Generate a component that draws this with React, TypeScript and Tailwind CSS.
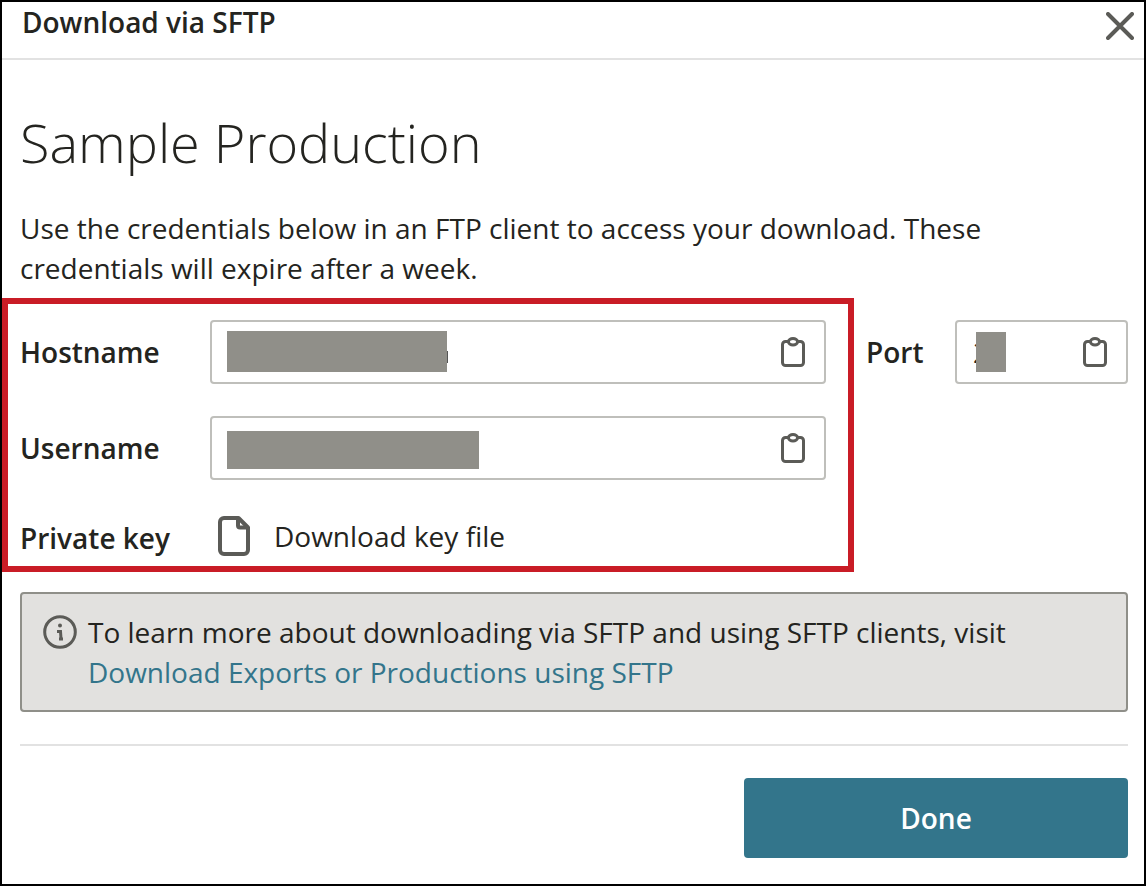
import type { ReactNode } from 'react';

function CloseIcon() {
    return (
        <svg width="28" height="28" viewBox="0 0 28 28" fill="none" stroke="currentColor" strokeWidth="4" strokeLinecap="round" aria-hidden="true">
            <path d="M2 2 26 26M26 2 2 26" />
        </svg>
    );
}

function ClipboardIcon() {
    return (
        <svg width="24" height="30" viewBox="0 0 24 30" fill="none" stroke="currentColor" strokeWidth="3" aria-hidden="true">
            <path d="M7 4.5H4.5a3 3 0 0 0-3 3v18a3 3 0 0 0 3 3h15a3 3 0 0 0 3-3v-18a3 3 0 0 0-3-3H17" />
            <ellipse cx="12" cy="4.8" rx="4.5" ry="3.2" />
        </svg>
    );
}

function FileIcon() {
    return (
        <svg width="32" height="40" viewBox="0 0 32 40" fill="none" stroke="currentColor" strokeWidth="4" strokeLinejoin="round" aria-hidden="true">
            <path d="M20.500 2H6a4 4 0 0 0-4 4v28a4 4 0 0 0 4 4h20a4 4 0 0 0 4-4V11.500z" />
            <path d="M20 2v7.500a2 2 0 0 0 2 2h8" />
        </svg>
    );
}

function InfoIcon() {
    return (
        <svg width="34" height="34" viewBox="0 0 34 34" fill="none" stroke="currentColor" strokeWidth="3" aria-hidden="true">
            <circle cx="17" cy="17" r="15.3" />
            <circle cx="17" cy="10.500" r="2" fill="currentColor" stroke="none" />
            <path d="M14 16.500h3.500l.5 7M16 24h4" />
        </svg>
    );
}

type CopyFieldProps = {
    id: string;
    label: string;
    value?: string;
    children: ReactNode;
};

function CopyField({ id, label, value = '', children }: CopyFieldProps) {
    return (
        <div className="relative flex h-16 min-w-0 flex-1 items-center rounded border-2 border-[#bfbfbb] pr-[19px]">
            <input id={id} type="text" readOnly value={value} className="h-full min-w-0 flex-1 bg-transparent pl-4 outline-none" />
            {children}
            <button type="button" aria-label={`Copy ${label}`} className="text-[#5b5b57]">
                <ClipboardIcon />
            </button>
        </div>
    );
}

export default function App() {
    return (
        <div className="flex min-h-screen flex-col border-2 border-black bg-white font-['Open_Sans',sans-serif] text-[28px] leading-10 text-[#242420]">
            <header className="flex h-[58px] items-start justify-between border-b-2 border-[#e2e2e2] pr-[10px] pl-5">
                <h2 className="font-semibold">Download via SFTP</h2>
                <button type="button" aria-label="Close" className="pt-[10px] text-[#5b5b57]">
                    <CloseIcon />
                </button>
            </header>

            <div className="pr-4 pl-[18px]">
                <h1 className="pt-[50px] text-[54px] leading-16 font-light">Sample Production</h1>
                <p className="mt-[34px] mb-[10px]">
                    Use the credentials below in an FTP client to access your download. These credentials will expire after a week.
                </p>
            </div>

            {/* Credentials */}
            <div className="flex items-start pr-4">
                <div className="min-w-0 flex-1 border-6 border-[#c91c26] pt-4 pr-[22px] pb-2 pl-3">
                    <div className="flex items-center">
                        <label htmlFor="hostname" className="w-[190px] font-semibold">Hostname</label>
                        <CopyField id="hostname" label="hostname">
                            <span className="absolute top-[9px] left-[15px] h-[41px] w-[220px] bg-[#908f89]">
                                <span className="absolute top-5 left-full h-3 w-px bg-[#555]" />
                            </span>
                        </CopyField>
                    </div>
                    <div className="mt-8 flex items-center">
                        <label htmlFor="username" className="w-[190px] font-semibold">Username</label>
                        <CopyField id="username" label="username">
                            <span className="absolute top-[13px] left-[15px] h-[38px] w-[252px] bg-[#908f89]" />
                        </CopyField>
                    </div>
                    <div className="mt-[34px] flex items-center">
                        <span className="w-[190px] pt-1 font-semibold">Private key</span>
                        <a href="#key" className="flex items-center gap-6 pl-2">
                            <span className="text-[#5b5b57]"><FileIcon /></span>
                            Download key file
                        </a>
                    </div>
                </div>

                <div className="ml-3 flex w-[262px] items-center pt-[22px]">
                    <label htmlFor="port" className="w-[89px] font-semibold">Port</label>
                    <CopyField id="port" label="port" value="22">
                        <span className="absolute top-[10px] left-[19px] h-10 w-[30px] bg-[#908f89]" />
                    </CopyField>
                </div>
            </div>

            <div className="pt-5 pr-4 pb-[26px] pl-[18px]">
                <div className="flex gap-[11px] rounded border-2 border-[#8f8f89] bg-[#e2e1df] py-[18px] pr-5 pl-[21px]">
                    <span className="flex h-10 shrink-0 items-center text-[#5b5b57]"><InfoIcon /></span>
                    <p>
                        To learn more about downloading via SFTP and using SFTP clients, visit{' '}
                        <a href="#sftp" className="block text-[#33758b]">Download Exports or Productions using SFTP</a>
                    </p>
                </div>

                <footer className="mt-8 flex justify-end border-t-2 border-[#e2e2e2] pt-8">
                    <button type="button" className="h-20 w-96 rounded bg-[#33758b] font-semibold text-white">
                        Done
                    </button>
                </footer>
            </div>
        </div>
    );
}
